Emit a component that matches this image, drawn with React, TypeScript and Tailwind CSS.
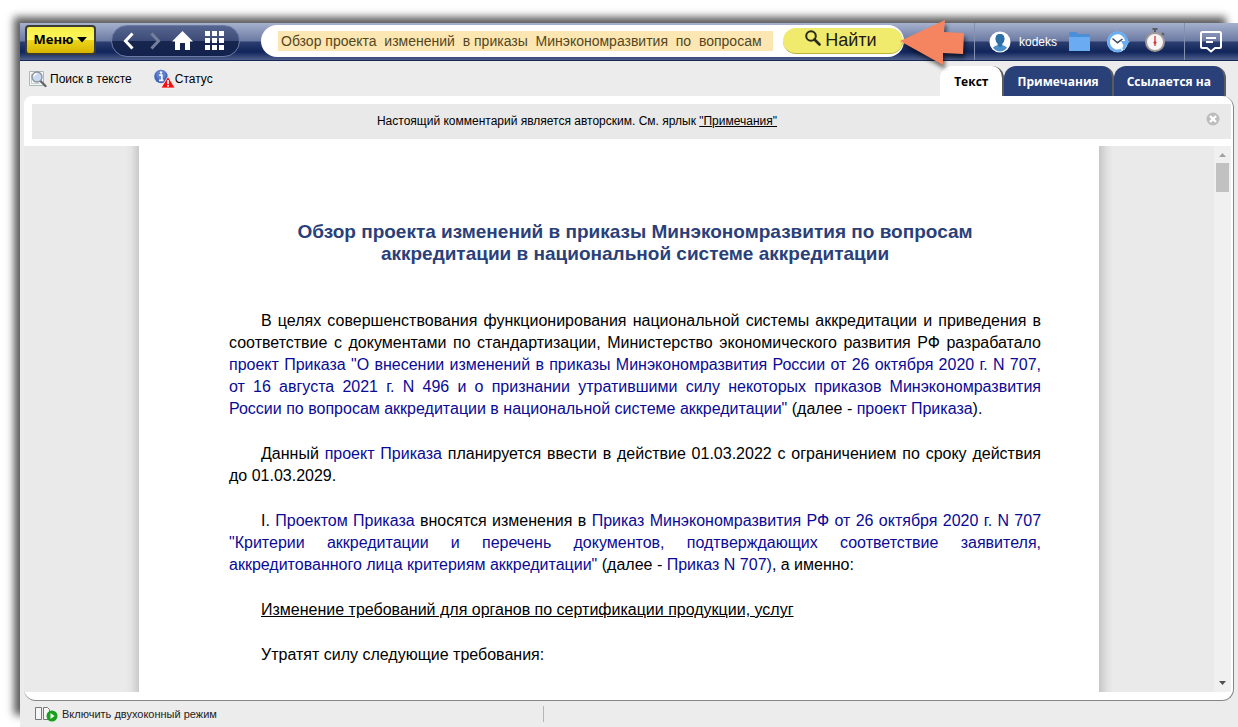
import type { ReactNode } from "react";

const TABS = [
  { id: "text", label: "Текст", active: true },
  { id: "notes", label: "Примечания", active: false },
  { id: "refs", label: "Ссылается на", active: false },
];

const QUERY = "Обзор проекта  изменений  в приказы  Минэкономразвития  по  вопросам";

function DocLink({ children }: { children: ReactNode }) {
  return (
    <a href="#doc" className="text-[#0a0a96]">
      {children}
    </a>
  );
}

function GridIcon() {
  const cells = [0, 7, 14];
  return (
    <svg width="20" height="20" viewBox="0 0 20 20" fill="#fff">
      {cells.map((y) => cells.map((x) => <rect key={`${x}-${y}`} x={x} y={y} width="5" height="5" />))}
    </svg>
  );
}

function SearchInTextIcon() {
  return (
    <svg width="18" height="18" viewBox="0 0 18 18" fill="none">
      <path d="M.5 1.500h14v14H.5z" fill="#f4f8f8" stroke="#a9b9b9" />
      <path d="M2.500 4v10M2.500 13.500h8" stroke="#c3d3d0" />
      <path d="M11.500 11l5 5" stroke="#666" strokeWidth="2.400" strokeLinecap="round" />
      <circle cx="8" cy="7" r="5" fill="#c9d9f2" stroke="#8a929c" strokeWidth="1.300" />
      <path d="M5 6.500a3 3 0 0 1 3-2.700" stroke="#fff" strokeWidth="1.400" />
    </svg>
  );
}

function StatusIcon() {
  return (
    <svg width="21" height="20" viewBox="0 0 21 20">
      <circle cx="7" cy="7.500" r="6.800" fill="#4468bd" />
      <circle cx="7" cy="5.500" r="4.800" fill="#7d9ae0" opacity=".5" />
      <path d="M5.200 6.200h2.600v5M5 11.400h4.500" stroke="#fff" strokeWidth="1.700" fill="none" />
      <circle cx="7" cy="3.500" r="1.200" fill="#fff" />
      <path d="M14 7.500l7 11.500H7z" fill="#fb0b0b" stroke="#fff" strokeWidth=".7" />
      <path d="M14 11v4.200M14 16v1.700" stroke="#fff" strokeWidth="1.700" />
    </svg>
  );
}

function AvatarIcon() {
  return (
    <svg width="22" height="22" viewBox="0 0 22 22">
      <circle cx="11" cy="11" r="10.500" fill="#fff" />
      <path
        d="M11 3c-3 0-4.400 2-4.400 4.800 0 2.200.9 3.800 2.200 5v1.300c-1.300.8-3.800 1.200-4.800 2.700A9.300 9.300 0 0 0 11 20.500a9.300 9.300 0 0 0 7-3.700c-1-1.500-3.500-1.900-4.800-2.700v-1.300c1.300-1.200 2.200-2.800 2.200-5C15.400 5 14 3 11 3z"
        fill="#4a8fc9"
      />
      <path
        d="M11 3c-3 0-4.400 2-4.400 4.800 0 2.200.9 3.800 2.200 5v1.300L11 16.500l2.200-2.400v-1.300c1.300-1.200 2.200-2.800 2.200-5C15.400 5 14 3 11 3z"
        fill="#2f6fa8"
      />
    </svg>
  );
}

function FolderIcon() {
  return (
    <svg width="21" height="19" viewBox="0 0 21 19">
      <path d="M0 1.500Q0 0 1.500 0H7l2 2h10.500Q21 2 21 3.500V8H0z" fill="#4a8fd8" />
      <path d="M0 5h21v14H0z" fill="#6aabf1" />
    </svg>
  );
}

function HistoryIcon() {
  return (
    <svg width="23" height="22" viewBox="0 0 23 22">
      <circle cx="10.500" cy="11" r="10.300" fill="#fff" />
      <path d="M14.500 19a9 9 0 1 1 5-9" fill="none" stroke="#6aaef2" strokeWidth="2.800" />
      <path d="M5.500 7.500l5 4.200 5-3.700" fill="none" stroke="#3d4b5c" strokeWidth="1.500" />
      <path d="M14 10h9l-3.500 5-2.500 4.500-2-2 1.500-3z" fill="#6aaef2" />
    </svg>
  );
}

function StopwatchIcon() {
  return (
    <svg width="21" height="24" viewBox="0 0 21 24">
      <path d="M7.500 1h5M10 1v4M17 5l2 2" stroke="#5c5c60" strokeWidth="2" />
      <circle cx="10" cy="14" r="9" fill="#f6f6f6" stroke="#a19a96" strokeWidth="2" />
      <path d="M10 8v10" stroke="#e04848" strokeWidth="1.500" />
      <circle cx="10" cy="14.500" r="1.500" fill="#d83c3c" />
    </svg>
  );
}

function ChatIcon() {
  return (
    <svg width="22" height="22" viewBox="0 0 22 22" fill="none" stroke="#fff" strokeWidth="2">
      <path
        d="M2.500 1h17Q21 1 21 2.500v13q0 1.500-1.500 1.500H15l-4 3.500L7 17H2.500Q1 17 1 15.500v-13Q1 1 2.500 1z"
        strokeLinejoin="round"
      />
      <path d="M6 7h10M6 11h7" />
    </svg>
  );
}

function PointerArrow() {
  return (
    <svg
      className="absolute left-full top-1/2 -ml-1 -mt-[21px] drop-shadow-[2px_4px_2px_rgba(0,0,0,0.55)]"
      width="66"
      height="46"
      viewBox="0 0 66 46"
    >
      <path d="M0 21L45 0l-1 12 20 1-1 21-20-1v12z" fill="#f58561" />
    </svg>
  );
}

function Header() {
  return (
    <header className="flex h-[38px] items-center border-b border-[#172857] bg-[linear-gradient(#a6b1cd_0%,#6b7aa3_49%,#2c3e70_51%,#10255a_78%,#4f5f8c_100%)] pl-[5px]">
      <button className="mb-1 flex h-[30px] w-[71px] shrink-0 items-center justify-center gap-1 rounded border-2 border-[#3b3b33] bg-[linear-gradient(#f6ef45_0%,#fdf65c_48%,#ecd51c_52%,#d9b500_100%)] font-['Open_Sans',sans-serif] text-[13px] font-bold text-black">
        Меню
        <svg width="10" height="6" viewBox="0 0 10 6">
          <path d="M0 0h10L5 5.500z" />
        </svg>
      </button>

      <nav className="mb-0.5 ml-[15px] flex h-8 w-[129px] shrink-0 items-center rounded-full border border-[#6b7aa3] bg-[linear-gradient(#56658f_0%,#3d4b78_49%,#17264f_51%,#13224c_100%)] pl-[11px]">
        <button aria-label="Назад">
          <svg width="11" height="18" viewBox="0 0 11 18" fill="none" stroke="#fff" strokeWidth="3">
            <path d="M9.500 1.500L2.500 9l7 7.500" />
          </svg>
        </button>
        <button aria-label="Вперёд" className="ml-4">
          <svg width="11" height="18" viewBox="0 0 11 18" fill="none" stroke="#75809f" strokeWidth="3">
            <path d="M1.500 1.500l7 7.500-7 7.500" />
          </svg>
        </button>
        <button aria-label="Домой" className="ml-[11px]">
          <svg width="21" height="19" viewBox="0 0 21 19" fill="#fff">
            <path d="M10.500 0L21 10.500h-3V19h-5v-7H8v7H3v-8.500H0z" />
          </svg>
        </button>
        <button aria-label="Разделы" className="ml-3">
          <GridIcon />
        </button>
      </nav>

      <form className="relative mb-0.5 ml-[21px] flex h-8 flex-1 items-center rounded-full bg-white pl-[17px] pr-px">
        <input
          aria-label="Строка поиска"
          defaultValue={QUERY}
          className="h-5 min-w-0 flex-1 bg-[#fce6b2] px-[3px] text-sm text-[#54471f] outline-none"
        />
        <button
          type="button"
          className="ml-2.5 flex h-[26px] w-[120px] items-center justify-center gap-1 rounded-full border-b border-[#b9b13a] bg-[#f0ea6d] pr-1 text-lg leading-6 text-[#1d1d14]"
        >
          <svg width="16" height="16" viewBox="0 0 16 16" fill="none" stroke="#29291f" className="mb-1">
            <circle cx="6" cy="6" r="4.800" strokeWidth="2" />
            <path d="M9.500 9.500l5 5" strokeWidth="2.600" strokeLinecap="round" />
          </svg>
          Найти
        </button>
        <PointerArrow />
      </form>

      <div className="ml-[70px] flex h-full shrink-0 items-center border-l border-[#8490b0] pl-3.5">
        <button className="flex items-center gap-2 text-xs text-white">
          <AvatarIcon />
          kodeks
        </button>
        <button aria-label="Папки" className="ml-3">
          <FolderIcon />
        </button>
        <button aria-label="История" className="ml-[17px]">
          <HistoryIcon />
        </button>
        <button aria-label="Контроль" className="mb-1 ml-[15px]">
          <StopwatchIcon />
        </button>
      </div>
      <div className="ml-[18px] flex h-full w-[54px] shrink-0 items-center border-l border-[#8490b0] pl-[15px]">
        <button aria-label="Сообщения">
          <ChatIcon />
        </button>
      </div>
    </header>
  );
}

function Toolbar() {
  return (
    <div className="flex h-[35px] items-end justify-between pl-[9px] pr-3">
      <div className="flex h-full items-center gap-[22px] text-xs">
        <button className="flex items-center gap-[3px]">
          <SearchInTextIcon />
          Поиск в тексте
        </button>
        <button className="flex items-center">
          <StatusIcon />
          Статус
        </button>
      </div>
      <div role="tablist" className="flex font-['Open_Sans',sans-serif] text-xs font-bold">
        {TABS.map((tab) => (
          <button
            key={tab.id}
            role="tab"
            aria-selected={tab.active}
            className={`h-[30px] rounded-t-xl border-r-2 border-[#5b5b5b] pt-0.5 ${
              tab.active ? "bg-white px-3.5 text-black" : "bg-[#2a4079] px-[13px] text-white"
            }`}
          >
            {tab.label}
          </button>
        ))}
      </div>
    </div>
  );
}

function Notice() {
  return (
    <div className="ml-2 mt-2 flex h-[35px] shrink-0 items-center bg-[#e9e9e9] pr-[11px] text-xs">
      <p className="mb-0.5 flex-1 pr-[84px] text-center">
        Настоящий комментарий является авторским. См. ярлык{" "}
        <a href="#notes" className="underline">
          "Примечания"
        </a>
      </p>
      <button aria-label="Закрыть" className="mb-1.5">
        <svg width="14" height="14" viewBox="0 0 14 14">
          <circle cx="7" cy="7" r="6.500" fill="#bdbdbd" />
          <path d="M4 4l6 6M10 4l-6 6" stroke="#fff" strokeWidth="2.400" />
        </svg>
      </button>
    </div>
  );
}

function Scrollbar() {
  return (
    <div className="flex w-[17px] shrink-0 flex-col items-center bg-[#f0f0f0]">
      <svg width="17" height="17" viewBox="0 0 17 17" fill="#a3a3a3">
        <path d="M5 11l3.500-4 3.500 4z" />
      </svg>
      <div className="h-[29px] w-[13px] bg-[#c1c1c1]" />
      <svg width="17" height="17" viewBox="0 0 17 17" fill="#505050" className="mt-auto">
        <path d="M5 6h7l-3.500 4z" />
      </svg>
    </div>
  );
}

function Article() {
  return (
    <article className="w-[960px] bg-white pb-8 pl-[90px] pr-[58px] pt-[75px] text-base leading-[22px]">
      <h1 className="mb-[45px] text-center text-[19px] font-bold leading-[22px] text-[#2a4079]">
        Обзор проекта изменений в приказы Минэкономразвития по вопросам
        <br />
        аккредитации в национальной системе аккредитации
      </h1>
      <div className="space-y-[23px] text-justify indent-8">
        <p>
          В целях совершенствования функционирования национальной системы аккредитации и приведения в соответствие с
          документами по стандартизации, Министерство экономического развития РФ разрабатало{" "}
          <DocLink>
            проект Приказа "О внесении изменений в приказы Минэкономразвития России от 26 октября 2020 г. N 707, от 16
            августа 2021 г. N 496 и о признании утратившими силу некоторых приказов Минэкономразвития России по вопросам
            аккредитации в национальной системе аккредитации"
          </DocLink>{" "}
          (далее - <DocLink>проект Приказа</DocLink>).
        </p>
        <p>
          Данный <DocLink>проект Приказа</DocLink> планируется ввести в действие 01.03.2022 с ограничением по сроку
          действия до 01.03.2029.
        </p>
        <p>
          I. <DocLink>Проектом Приказа</DocLink> вносятся изменения в{" "}
          <DocLink>
            Приказ Минэкономразвития РФ от 26 октября 2020 г. N 707 "Критерии аккредитации и перечень документов,
            подтверждающих соответствие заявителя, аккредитованного лица критериям аккредитации"
          </DocLink>{" "}
          (далее - <DocLink>Приказ N 707)</DocLink>, а именно:
        </p>
        <p>
          <u>Изменение требований для органов по сертификации продукции, услуг</u>
        </p>
        <p>Утратят силу следующие требования:</p>
      </div>
    </article>
  );
}

function StatusBar() {
  return (
    <footer className="flex h-[26px] shrink-0 items-center text-[11px] text-[#222]">
      <div className="flex h-4 w-[43%] items-center border-r border-[#b5b5b5] pl-[15px]">
        <button className="flex items-center gap-1">
          <svg width="23" height="16" viewBox="0 0 23 16">
            <path d="M.5 1.500h6v12h-6zM8.500 1.500h4l2 2v10h-6z" fill="#f6f6f6" stroke="#777" />
            <circle cx="17" cy="10" r="5.500" fill="#16a01c" />
            <path d="M15.500 7l4 3-4 3z" fill="#fff" />
          </svg>
          Включить двухоконный режим
        </button>
      </div>
    </footer>
  );
}

export default function App() {
  return (
    <div className="h-screen overflow-hidden bg-white pl-5 pt-[23px] font-['Liberation_Sans',Arial,sans-serif] text-black">
      <div className="flex h-full flex-col bg-[#ececec] shadow-[-9px_-9px_8px_-3px_rgba(0,0,0,0.65)]">
        <Header />
        <Toolbar />
        <main className="mx-1 flex min-h-0 flex-1 flex-col rounded-xl rounded-tl-lg border-b border-r border-[#858585] bg-white pb-2 pr-0.5">
          <Notice />
          <div className="mt-[7px] flex min-h-0 flex-1 overflow-hidden">
            <div className="flex min-w-0 flex-1 overflow-hidden">
              <div className="flex-1 bg-[linear-gradient(to_left,#cacaca,#e4e4e4_8px,#eaeaea_14px)]" />
              <Article />
              <div className="flex-1 bg-[linear-gradient(to_right,#c6c6c6,#e0e0e0_8px,#eaeaea_14px)]" />
            </div>
            <Scrollbar />
          </div>
        </main>
        <StatusBar />
      </div>
    </div>
  );
}
